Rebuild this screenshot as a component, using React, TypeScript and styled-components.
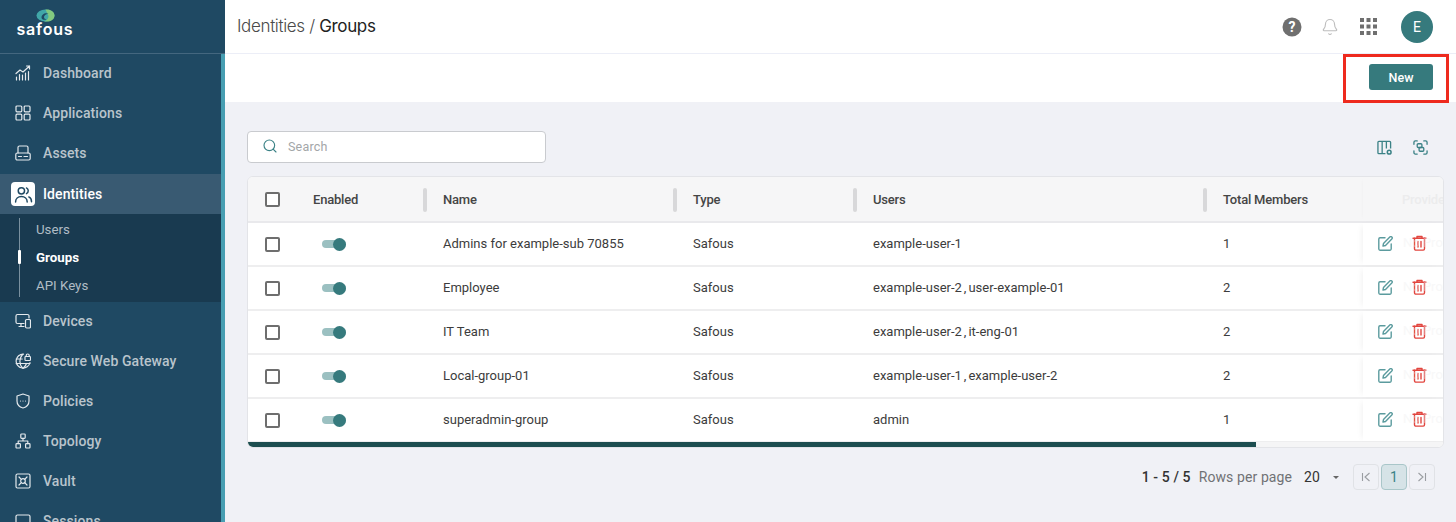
import React from "react";
import styled, { createGlobalStyle } from "styled-components";
import { Search, Bell } from "lucide-react";

const GlobalStyle = createGlobalStyle`
  html, body {
    margin: 0;
    padding: 0;
    height: 522px;
    overflow: hidden;
    background: #f0f1f6;
    font-family: Roboto, "Liberation Sans", sans-serif;
  }
  * { box-sizing: border-box; }
`;

const Page = styled.div`
  display: flex;
  width: 1456px;
  height: 522px;
  overflow: hidden;
`;

const Sidebar = styled.aside`
  width: 225px;
  flex: none;
  height: 522px;
  overflow: hidden;
  background: #1f4963;
  display: flex;
  flex-direction: column;
`;

const Brand = styled.div`
  height: 54px;
  flex: none;
  border-bottom: 1px solid #44677f;
  display: flex;
  flex-direction: column;
  align-items: center;
  padding: 9px 135px 0 0;
`;

const BrandName = styled.span`
  font-family: Inter, sans-serif;
  font-size: 16px;
  line-height: 14px;
  font-weight: 600;
  letter-spacing: 0.8px;
  color: #fff;
`;

const NavArea = styled.div`
  flex: 1;
  border-right: 4px solid #479eb2;
`;

const NavItem = styled.div<{ $active?: boolean }>`
  height: 40px;
  display: flex;
  align-items: center;
  padding-left: ${(p) => (p.$active ? 11 : 15)}px;
  padding-bottom: ${(p) => (p.$active ? 0 : 2)}px;
  gap: ${(p) => (p.$active ? 8 : 12)}px;
  font-size: 14px;
  font-weight: 500;
  letter-spacing: 0.1px;
  color: ${(p) => (p.$active ? "#ffffff" : "#b9c4cc")};
  background: ${(p) => (p.$active ? "#395a72" : "transparent")};
`;

const NavIcon = styled.span<{ $active?: boolean }>`
  display: flex;
  align-items: center;
  justify-content: center;
  flex: none;
  width: ${(p) => (p.$active ? 24 : 16)}px;
  height: ${(p) => (p.$active ? 24 : 16)}px;
  border-radius: 4px;
  color: ${(p) => (p.$active ? "#1f4963" : "#e4e9ed")};
  background: ${(p) => (p.$active ? "#fff" : "transparent")};
`;

const SubNav = styled.div`
  height: 88px;
  background: #193a50;
  padding: 1px 0 0 19px;
`;

const SubList = styled.div`
  position: relative;
  height: 84px;
  &::before {
    content: "";
    position: absolute;
    left: 0;
    top: 3px;
    width: 1px;
    height: 79px;
    background: #7a909f;
  }
`;

const SubItem = styled.div<{ $active?: boolean }>`
  position: relative;
  height: 28px;
  display: flex;
  align-items: center;
  padding-left: 17px;
  font-size: 13.3px;
  font-weight: ${(p) => (p.$active ? 700 : 400)};
  color: ${(p) => (p.$active ? "#ffffff" : "#b0bcc5")};
  ${(p) =>
    p.$active &&
    `&::before {
      content: "";
      position: absolute;
      left: -1px;
      top: 7px;
      width: 3px;
      height: 14px;
      background: #fff;
      border-radius: 1px;
    }`}
`;

const Main = styled.main`
  flex: 1;
  min-width: 0;
  display: flex;
  flex-direction: column;
`;

const TopBar = styled.header`
  height: 54px;
  flex: none;
  background: #fff;
  border-bottom: 1px solid #eceef7;
  display: flex;
  align-items: center;
  padding: 0 23px 0 12px;
`;

const Crumbs = styled.div`
  flex: 1;
  font-family: Inter, sans-serif;
  font-size: 17px;
  letter-spacing: -0.35px;
  color: #4a4a4a;
  font-weight: 300;
  padding-bottom: 2px;
  strong {
    font-weight: 400;
    color: #222;
  }
`;

const TopIcons = styled.div`
  display: flex;
  align-items: center;
`;

const Spacer = styled.span<{ $w: number }>`
  width: ${(p) => p.$w}px;
`;

const Avatar = styled.div`
  width: 32px;
  height: 32px;
  border-radius: 50%;
  background: #367a7d;
  color: #fff;
  font-size: 14px;
  display: flex;
  align-items: center;
  justify-content: center;
  margin-left: 24px;
`;

const ActionBar = styled.div`
  height: 48px;
  flex: none;
  background: #fff;
  display: flex;
  align-items: center;
  justify-content: flex-end;
  padding: 0 23px 2px 0;
  position: relative;
`;

const Callout = styled.div`
  position: absolute;
  right: 7px;
  top: 0;
  width: 106px;
  height: 49px;
  border: 3px solid #ee2a1e;
`;

const NewButton = styled.button`
  width: 64px;
  height: 26px;
  border: 0;
  border-radius: 3px;
  background: #367a7d;
  color: #fff;
  font-family: Roboto, sans-serif;
  font-size: 12.5px;
  font-weight: 500;
  padding: 0;
`;

const Content = styled.div`
  flex: 1;
  background: #f0f1f6;
  padding: 29px 12px 0 22px;
`;

const Toolbar = styled.div`
  display: flex;
  align-items: center;
  justify-content: space-between;
  height: 32px;
  margin-bottom: 13px;
`;

const SearchBox = styled.div`
  width: 299px;
  height: 32px;
  background: #fff;
  border: 1px solid #c9cbcf;
  border-radius: 4px;
  display: flex;
  align-items: center;
  gap: 10px;
  padding: 0 0 2px 14px;
  font-size: 12.5px;
  letter-spacing: 0.2px;
  color: #a3a6a8;
`;

const ToolIcons = styled.div`
  display: flex;
  gap: 21px;
  padding-right: 16px;
  color: #3b8286;
`;

const Table = styled.div`
  position: relative;
  width: 1197px;
  height: 272px;
  background: #fff;
  border: 1px solid #e3e4e8;
  border-radius: 6px;
  overflow: hidden;
`;

const columns = "65px 130px 250px 180px 350px 140px 1fr";

const HeadRow = styled.div`
  display: grid;
  grid-template-columns: ${columns};
  height: 46px;
  background: #f6f6f7;
  border-bottom: 2px solid #e9e9ec;
`;

const HeadCell = styled.div<{ $sep?: boolean }>`
  position: relative;
  display: flex;
  align-items: center;
  font-size: 13px;
  font-weight: 500;
  letter-spacing: -0.2px;
  color: #454545;
  ${(p) =>
    p.$sep &&
    `&::after {
      content: "";
      position: absolute;
      right: 16px;
      top: 11px;
      width: 4px;
      height: 24px;
      border-radius: 2px;
      background: #d8d8da;
    }`}
`;

const CheckCell = styled.div`
  display: flex;
  align-items: center;
  justify-content: center;
  width: 48px;
`;

const Box = styled.span`
  width: 15px;
  height: 15px;
  border: 2px solid #6e6e6e;
  border-radius: 2px;
  background: #fff;
`;

const Row = styled.div`
  display: grid;
  grid-template-columns: ${columns};
  height: 44px;
  border-bottom: 2px solid #eeeeef;
`;

const Cell = styled.div`
  display: flex;
  align-items: center;
  font-size: 13px;
  color: #3c3c3c;
  white-space: pre;
  padding-bottom: 2px;
`;

const UsersCell = styled(Cell)`
  word-spacing: -1.2px;
`;

const BoxCell = styled(Cell)`
  padding-bottom: 0;
`;

const ToggleCell = styled(Cell)`
  padding: 0 0 0 9px;
`;

const ToggleTrack = styled.span`
  position: relative;
  display: block;
  width: 24px;
  height: 8px;
  border-radius: 4px;
  background: #9bc0c1;
`;

const ToggleKnob = styled.span`
  position: absolute;
  right: 0;
  top: -2.5px;
  width: 13px;
  height: 13px;
  border-radius: 50%;
  background: #367a7d;
`;

const ActionCell = styled.div`
  position: relative;
  display: flex;
  align-items: center;
  gap: 19px;
  padding: 0 0 2px 15px;
  box-shadow: -4px 0 6px -3px rgba(0, 0, 0, 0.06);
  overflow: hidden;
`;

const GhostText = styled.span`
  position: absolute;
  left: 40px;
  top: 12px;
  font-size: 13px;
  color: #eeeeef;
  opacity: 0.4;
  white-space: nowrap;
`;

const GhostHead = styled(HeadCell)`
  padding-left: 39px;
  color: #ececed;
  overflow: hidden;
  white-space: nowrap;
  box-shadow: -2px 0 4px -3px rgba(0, 0, 0, 0.05);
`;

const ScrollTrack = styled.div`
  position: absolute;
  left: 0;
  right: 0;
  bottom: 0;
  height: 5px;
  background: #f5f5f6;
`;

const ScrollThumb = styled.div`
  width: 1008px;
  height: 5px;
  background: #1d4e50;
`;

const Pager = styled.div`
  display: flex;
  align-items: center;
  justify-content: flex-end;
  height: 30px;
  margin-top: 14px;
  padding-right: 9px;
  font-size: 14px;
  letter-spacing: 0.1px;
`;

const PageCount = styled.span`
  font-weight: 500;
  color: #333;
  margin-right: 8px;
`;

const PageLabel = styled.span`
  color: #707275;
  margin-right: 12px;
`;

const PageSize = styled.span`
  color: #333;
  display: flex;
  align-items: center;
  gap: 13px;
  margin-right: 12px;
`;

const Caret = styled.span`
  width: 0;
  height: 0;
  border-left: 3px solid transparent;
  border-right: 3px solid transparent;
  border-top: 3px solid #666;
`;

const PageButton = styled.span<{ $current?: boolean }>`
  width: 26px;
  height: 26px;
  margin-left: 2px;
  border: 1px solid ${(p) => (p.$current ? "#a9c6c9" : "#e0e2e6")};
  border-radius: 4px;
  display: flex;
  align-items: center;
  justify-content: center;
  color: ${(p) => (p.$current ? "#3b8286" : "#9a9da1")};
  background: ${(p) => (p.$current ? "#d6e3e7" : "transparent")};
`;

type IconProps = { size?: number };

const Line = ({ size = 16, children }: IconProps & { children: React.ReactNode }) => (
  <svg width={size} height={size} viewBox="0 0 16 16" fill="none" stroke="currentColor" strokeWidth="1.2" strokeLinecap="round" strokeLinejoin="round">
    {children}
  </svg>
);

const DashboardIcon = () => (
  <Line>
    <path d="M1 8.500 5 5l3 2 6.500-6M11.500 1h3v3" />
    <path d="M1.500 15v-3M4.500 15V9.500M7.500 15v-5M10.500 15V8M13.500 15V6.500" />
  </Line>
);
const AppsIcon = () => (
  <Line>
    <rect x="1" y="1" width="5.800" height="5.800" rx="1" />
    <rect x="9.200" y="1" width="5.800" height="5.800" rx="1" />
    <rect x="1" y="9.200" width="5.800" height="5.800" rx="1" />
    <rect x="9.200" y="9.200" width="5.800" height="5.800" rx="1" />
  </Line>
);
const AssetsIcon = () => (
  <Line>
    <path d="M3 8V2.500A1.500 1.500 0 0 1 4.500 1h7A1.500 1.500 0 0 1 13 2.500V8" />
    <rect x="0.800" y="8" width="14.400" height="7" rx="1.500" />
    <path d="M3.500 11.500h3M9 11.500h3.500" />
  </Line>
);
const PeopleIcon = () => (
  <svg width="19" height="19" viewBox="0 0 18 18" fill="none" stroke="currentColor" strokeWidth="1.400" strokeLinecap="round">
    <circle cx="7" cy="5.500" r="3" />
    <path d="M1.500 16c0-3 2.300-5 5.500-5s5.500 2 5.500 5" />
    <path d="M11.800 2.800a3 3 0 0 1 0 5.400M14 11.300c1.600.7 2.600 2.300 2.600 4.500" />
  </svg>
);
const DevicesIcon = () => (
  <Line>
    <path d="M9 10.500H2.500A1.500 1.500 0 0 1 1 9V3a1.500 1.500 0 0 1 1.500-1.500h10A1.500 1.500 0 0 1 14 3v2" />
    <path d="M6 10.500V13M4 13.500h5" />
    <rect x="10.500" y="6.500" width="5" height="8.500" rx="1.200" />
  </Line>
);
const GatewayIcon = () => (
  <Line>
    <path d="M8.500 1.100A7 7 0 1 0 15 9.500" />
    <path d="M1.200 6h6M1.200 10.500H15M7.500 1.500C4 5.500 4 11 7.500 15M8.500 15c1.500-1.500 2.500-3 3-4.500" />
    <rect x="10" y="3.500" width="5.500" height="4" rx="0.800" />
    <path d="M11.200 3.500V2.500a1.500 1.500 0 0 1 3 0v1" />
  </Line>
);
const PolicyIcon = () => (
  <Line>
    <path d="M8 1 2 3v5c0 3.500 2.500 6 6 7 3.500-1 6-3.500 6-7V3z" />
    <path d="M5.500 8h.01M8 8h.01M10.500 8h.01" />
  </Line>
);
const TopologyIcon = () => (
  <Line>
    <rect x="5.800" y="1" width="4.400" height="4.400" rx="0.800" />
    <rect x="1" y="10.600" width="4.400" height="4.400" rx="0.800" />
    <rect x="10.600" y="10.600" width="4.400" height="4.400" rx="0.800" />
    <path d="M8 5.400V8M3.200 10.600V8h9.600v2.600" />
  </Line>
);
const VaultIcon = () => (
  <Line>
    <rect x="1" y="1" width="14" height="14" rx="1.500" />
    <path d="m4 4 2.300 2.300M12 4 9.700 6.300M4 12l2.300-2.300M12 12 9.700 9.700" />
    <circle cx="8" cy="8" r="2.300" />
  </Line>
);
const SessionsIcon = () => (
  <Line>
    <rect x="1" y="2" width="14" height="11" rx="1.500" />
  </Line>
);

const LogoMark = () => (
  <svg width="19" height="13" viewBox="0 0 19 13" fill="none">
    <ellipse cx="9.500" cy="6.500" rx="9" ry="6" fill="#41a7a8" />
    <path d="M9.500 0.500h1.500c4 0 7.500 2.500 7.500 6s-3 6-7 6H8c3-1 4.500-3 4.500-5.500z" fill="#82c97f" />
    <path d="M5.500 8.500c0-3 4-5.500 7-3.500-2-.5-4.500 1-4.500 3 0 2 2 2.500 3 2-2 1.500-5.500 1-5.500-1.500z" fill="#1f4963" />
  </svg>
);

const HelpIcon = () => (
  <svg width="20" height="20" viewBox="0 0 20 20">
    <circle cx="10" cy="10" r="9.500" fill="#6f6f6f" />
    <text x="10" y="15" textAnchor="middle" fontSize="14" fontWeight="700" fontFamily="Roboto, sans-serif" fill="#fff">?</text>
  </svg>
);

const GridIcon = () => (
  <svg width="17" height="17" viewBox="0 0 17 17" fill="#6f6f6f">
    {[0, 6.500, 13].flatMap((y) =>
      [0, 6.500, 13].map((x) => <rect key={`${x}-${y}`} x={x} y={y} width="4" height="4" />),
    )}
  </svg>
);

const ColumnsIcon = () => (
  <svg width="15" height="15" viewBox="0 0 16 16" fill="none" stroke="currentColor" strokeWidth="1.400">
    <path d="M9 14.500H2a1 1 0 0 1-1-1v-11a1 1 0 0 1 1-1h11.500a1 1 0 0 1 1 1V9" />
    <path d="M5.500 1.500v13M10 1.500V9" />
    <circle cx="13" cy="13" r="2" strokeWidth="1.600" />
  </svg>
);

const ScanIcon = () => (
  <svg width="15" height="15" viewBox="0 0 16 16" fill="none" stroke="currentColor" strokeWidth="1.400" strokeLinecap="round">
    <path d="M1 4.500V2.500A1.500 1.500 0 0 1 2.500 1h2M11.500 1h2A1.500 1.500 0 0 1 15 2.500v2M15 11.500v2a1.500 1.500 0 0 1-1.500 1.500h-2M4.500 15h-2A1.500 1.500 0 0 1 1 13.500v-2" />
    <rect x="4.500" y="4" width="5" height="4" rx="1" />
    <rect x="6.500" y="8" width="5" height="4" rx="1" />
  </svg>
);

const EditIcon = () => (
  <svg width="15" height="15" viewBox="0 0 15 15" fill="none" stroke="#5b9b9e" strokeWidth="1.400" strokeLinecap="round" strokeLinejoin="round">
    <path d="M7 1.800H2A1.300 1.300 0 0 0 .8 3v10A1.300 1.300 0 0 0 2 14.200h10a1.300 1.300 0 0 0 1.200-1.200V8" />
    <path d="M5.500 7.500 11.800 1a1.300 1.300 0 0 1 2 2L7.500 9.500l-2.500.5z" />
  </svg>
);

const TrashIcon = () => (
  <svg width="15" height="16" viewBox="0 0 15 16" fill="none" stroke="#e2463f" strokeWidth="1.400" strokeLinecap="round" strokeLinejoin="round">
    <path d="M1 3.300h13M5 3.300V1.500h5v1.800" />
    <path d="M2.500 3.300v10.500a1.300 1.300 0 0 0 1.300 1.300h7.400a1.300 1.300 0 0 0 1.300-1.300V3.300" />
    <path d="M6 6.500v5.500M9 6.500v5.500" />
  </svg>
);

const FirstIcon = ({ flip }: { flip?: boolean }) => (
  <svg width="10" height="10" viewBox="0 0 10 10" fill="none" stroke="currentColor" strokeWidth="1.100" style={flip ? { transform: "scaleX(-1)" } : undefined}>
    <path d="M1.500 1v8M8.500 1 4 5l4.500 4" />
  </svg>
);

const navTop = [
  { label: "Dashboard", icon: <DashboardIcon /> },
  { label: "Applications", icon: <AppsIcon /> },
  { label: "Assets", icon: <AssetsIcon /> },
];

const navBottom = [
  { label: "Devices", icon: <DevicesIcon /> },
  { label: "Secure Web Gateway", icon: <GatewayIcon /> },
  { label: "Policies", icon: <PolicyIcon /> },
  { label: "Topology", icon: <TopologyIcon /> },
  { label: "Vault", icon: <VaultIcon /> },
  { label: "Sessions", icon: <SessionsIcon /> },
];

const groups = [
  { name: "Admins for example-sub 70855", users: "example-user-1", total: 1 },
  { name: "Employee", users: "example-user-2 , user-example-01", total: 2 },
  { name: "IT Team", users: "example-user-2 , it-eng-01", total: 2 },
  { name: "Local-group-01", users: "example-user-1 , example-user-2", total: 2 },
  { name: "superadmin-group", users: "admin", total: 1 },
];

const App = () => {
  return (
    <Page>
      <GlobalStyle />
      <Sidebar>
        <Brand>
          <LogoMark />
          <BrandName>safous</BrandName>
        </Brand>
        <NavArea>
          {navTop.map((item) => (
            <NavItem key={item.label}>
              <NavIcon>{item.icon}</NavIcon>
              {item.label}
            </NavItem>
          ))}
          <NavItem $active>
            <NavIcon $active>
              <PeopleIcon />
            </NavIcon>
            Identities
          </NavItem>
          <SubNav>
            <SubList>
              <SubItem>Users</SubItem>
              <SubItem $active>Groups</SubItem>
              <SubItem>API Keys</SubItem>
            </SubList>
          </SubNav>
          {navBottom.map((item) => (
            <NavItem key={item.label}>
              <NavIcon>{item.icon}</NavIcon>
              {item.label}
            </NavItem>
          ))}
        </NavArea>
      </Sidebar>
      <Main>
        <TopBar>
          <Crumbs>
            Identities / <strong>Groups</strong>
          </Crumbs>
          <TopIcons>
            <HelpIcon />
            <Spacer $w={19} />
            <Bell size={18} color="#bdbdbd" strokeWidth={1.5} />
            <Spacer $w={21} />
            <GridIcon />
          </TopIcons>
          <Avatar>E</Avatar>
        </TopBar>
        <ActionBar>
          <NewButton>New</NewButton>
          <Callout />
        </ActionBar>
        <Content>
          <Toolbar>
            <SearchBox>
              <Search size={16} color="#3b8286" strokeWidth={1.7} />
              Search
            </SearchBox>
            <ToolIcons>
              <ColumnsIcon />
              <ScanIcon />
            </ToolIcons>
          </Toolbar>
          <Table>
            <HeadRow>
              <HeadCell>
                <CheckCell>
                  <Box />
                </CheckCell>
              </HeadCell>
              <HeadCell $sep>Enabled</HeadCell>
              <HeadCell $sep>Name</HeadCell>
              <HeadCell $sep>Type</HeadCell>
              <HeadCell $sep>Users</HeadCell>
              <HeadCell>Total Members</HeadCell>
              <GhostHead>Provider</GhostHead>
            </HeadRow>
            {groups.map((g) => (
              <Row key={g.name}>
                <BoxCell>
                  <CheckCell>
                    <Box />
                  </CheckCell>
                </BoxCell>
                <ToggleCell>
                  <ToggleTrack>
                    <ToggleKnob />
                  </ToggleTrack>
                </ToggleCell>
                <Cell>{g.name}</Cell>
                <Cell>Safous</Cell>
                <UsersCell>{g.users}</UsersCell>
                <Cell>{g.total}</Cell>
                <ActionCell>
                  <GhostText>No Provider</GhostText>
                  <EditIcon />
                  <TrashIcon />
                </ActionCell>
              </Row>
            ))}
            <ScrollTrack>
              <ScrollThumb />
            </ScrollTrack>
          </Table>
          <Pager>
            <PageCount>1 - 5 / 5</PageCount>
            <PageLabel>Rows per page</PageLabel>
            <PageSize>
              20
              <Caret />
            </PageSize>
            <PageButton>
              <FirstIcon />
            </PageButton>
            <PageButton $current>1</PageButton>
            <PageButton>
              <FirstIcon flip />
            </PageButton>
          </Pager>
        </Content>
      </Main>
    </Page>
  );
};

export default App;
